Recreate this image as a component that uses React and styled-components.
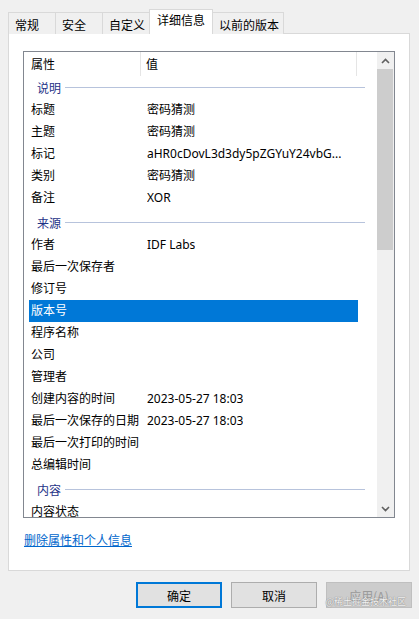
import React from "react";
import styled, { createGlobalStyle } from "styled-components";

const GlobalStyle = createGlobalStyle`
  html, body {
    margin: 0;
    padding: 0;
    background: #f0f0f0;
  }
  body {
    font-family: "Noto Sans", "Noto Sans CJK SC", sans-serif;
    font-size: 12px;
    color: #000;
  }
  * {
    box-sizing: border-box;
  }
`;

const tabs = ["常规", "安全", "自定义", "详细信息", "以前的版本"];

const sections = [
    {
        title: "说明",
        rows: [
            ["标题", "密码猜测"],
            ["主题", "密码猜测"],
            ["标记", "aHR0cDovL3d3dy5pZGYuY24vbG..."],
            ["类别", "密码猜测"],
            ["备注", "XOR"],
        ],
    },
    {
        title: "来源",
        rows: [
            ["作者", "IDF Labs"],
            ["最后一次保存者", ""],
            ["修订号", ""],
            ["版本号", ""],
            ["程序名称", ""],
            ["公司", ""],
            ["管理者", ""],
            ["创建内容的时间", "2023-05-27 18:03"],
            ["最后一次保存的日期", "2023-05-27 18:03"],
            ["最后一次打印的时间", ""],
            ["总编辑时间", ""],
        ],
    },
    {
        title: "内容",
        rows: [["内容状态", ""]],
    },
];

const Chevron = ({ down }) => (
    <svg width="9" height="6" viewBox="0 0 9 6">
        <path
            d={down ? "M1 1 L4.5 4.5 L8 1" : "M1 5 L4.5 1.5 L8 5"}
            fill="none"
            stroke="#606060"
            strokeWidth="1.6"
        />
    </svg>
);

const App = () => {
    const selected = "版本号";

    return (
        <Window>
            <GlobalStyle />
            <TabBar>
                {tabs.map((t) => (
                    <Tab key={t} active={t === "详细信息"}>{t}</Tab>
                ))}
            </TabBar>
            <Panel>
                <ListBox>
                    <ListArea>
                        <Header>
                            <HeadCell width={117} pad={7}>属性</HeadCell>
                            <HeadCell width={216} pad={5}>值</HeadCell>
                        </Header>
                        <Rows>
                            {sections.map((s, i) => (
                                <React.Fragment key={s.title}>
                                    <Group first={i === 0}>
                                        <span>{s.title}</span>
                                        <GroupLine />
                                    </Group>
                                    {s.rows.map(([k, v]) => (
                                        <Row key={k} selected={k === selected}>
                                            <Label>{k}</Label>
                                            <Value>{v}</Value>
                                        </Row>
                                    ))}
                                </React.Fragment>
                            ))}
                        </Rows>
                    </ListArea>
                    <ScrollBar>
                        <Arrow><Chevron /></Arrow>
                        <Thumb />
                        <Track />
                        <Arrow><Chevron down /></Arrow>
                    </ScrollBar>
                </ListBox>
                <LinkText>删除属性和个人信息</LinkText>
            </Panel>
            <Buttons>
                <Button primary>确定</Button>
                <Button>取消</Button>
                <Button disabled>应用(A)</Button>
            </Buttons>
            <Watermark>@稀土掘金技术社区</Watermark>
        </Window>
    );
};

const Window = styled.div`
  position: relative;
  width: 419px;
  height: 619px;
  overflow: hidden;
  background: #f0f0f0;
`;

const TabBar = styled.div`
  display: flex;
  align-items: flex-end;
  height: 34px;
  padding: 9px 0 0 8px;
`;

const Tab = styled.div`
  position: relative;
  z-index: ${(p) => (p.active ? 1 : 0)};
  min-width: 48px;
  height: ${(p) => (p.active ? "25px" : "22px")};
  padding: ${(p) => (p.active ? "2px 7px 0 7px" : "4px 4px 0 6px")};
  margin-left: -1px;
  border: 1px solid #d9d9d9;
  border-bottom: none;
  background: ${(p) => (p.active ? "#ffffff" : "#f0f0f0")};
  font-family: "Noto Sans CJK SC", sans-serif;
  font-size: 12px;
  line-height: 16px;
  white-space: nowrap;
  &:first-child {
    margin-left: 0;
  }
`;

const Panel = styled.div`
  width: 402px;
  height: 538px;
  margin: -1px 0 0 8px;
  padding: 17px 0 0 14px;
  background: #ffffff;
  border: 1px solid #d9d9d9;
`;

const ListBox = styled.div`
  display: flex;
  width: 372px;
  height: 467px;
  border: 1px solid #828790;
  background: #ffffff;
`;

const ListArea = styled.div`
  flex: 1;
  overflow: hidden;
`;

const Header = styled.div`
  display: flex;
  height: 24px;
`;

const HeadCell = styled.div`
  width: ${(p) => p.width}px;
  padding-left: ${(p) => p.pad}px;
  border-right: 1px solid #e5e5e5;
  line-height: 23px;
  font-family: "Noto Sans CJK SC", sans-serif;
`;

const Rows = styled.div`
  padding-left: 5px;
`;

const Group = styled.div`
  display: flex;
  align-items: center;
  gap: 4px;
  width: 336px;
  height: ${(p) => (p.first ? "23px" : "25px")};
  padding: ${(p) => (p.first ? "0 0 0 8px" : "2px 0 0 8px")};
  color: #1e3287;
  font-family: "Noto Sans CJK SC", sans-serif;
  line-height: 16px;
`;

const GroupLine = styled.div`
  flex: 1;
  height: 1px;
  background: #b7c3dc;
`;

const Row = styled.div`
  display: flex;
  align-items: center;
  width: 329px;
  height: 22px;
  padding-left: 2px;
  background: ${(p) => (p.selected ? "#0078d7" : "transparent")};
  color: ${(p) => (p.selected ? "#ffffff" : "#000000")};
  line-height: 16px;
  white-space: nowrap;
`;

const Label = styled.div`
  width: 116px;
  flex-shrink: 0;
`;

const Value = styled.div`
  overflow: hidden;
`;

const ScrollBar = styled.div`
  display: flex;
  flex-direction: column;
  width: 17px;
  background: #f0f0f0;
`;

const Arrow = styled.div`
  display: flex;
  align-items: center;
  justify-content: center;
  height: 17px;
  flex-shrink: 0;
`;

const Thumb = styled.div`
  height: 181px;
  margin: 0 1px 0 0;
  background: #cdcdcd;
`;

const Track = styled.div`
  flex: 1;
`;

const LinkText = styled.div`
  margin-top: 14px;
  margin-left: 1px;
  color: #0066cc;
  text-decoration: underline;
  font-family: "Noto Sans CJK SC", sans-serif;
  line-height: 16px;
`;

const Buttons = styled.div`
  display: flex;
  justify-content: flex-end;
  gap: 9px;
  margin-top: 11px;
  padding-right: 7px;
`;

const Button = styled.div`
  width: 86px;
  height: 26px;
  display: flex;
  align-items: center;
  justify-content: center;
  font-family: "Noto Sans CJK SC", sans-serif;
  font-size: 12px;
  background: ${(p) => (p.disabled ? "#cccccc" : "#e1e1e1")};
  border: ${(p) => (p.primary ? "2px solid #0078d7" : p.disabled ? "1px solid #bfbfbf" : "1px solid #adadad")};
  color: ${(p) => (p.disabled ? "#9a9a9a" : "#000000")};
`;

const Watermark = styled.div`
  position: absolute;
  right: 13px;
  bottom: 11px;
  font-family: "Noto Sans CJK SC", sans-serif;
  font-size: 9px;
  line-height: 12px;
  color: rgba(250, 250, 250, 0.95);
  text-shadow: 0 0 1px #8a8a8a, 0 0 1px #8a8a8a;
  pointer-events: none;
`;

export default App;
